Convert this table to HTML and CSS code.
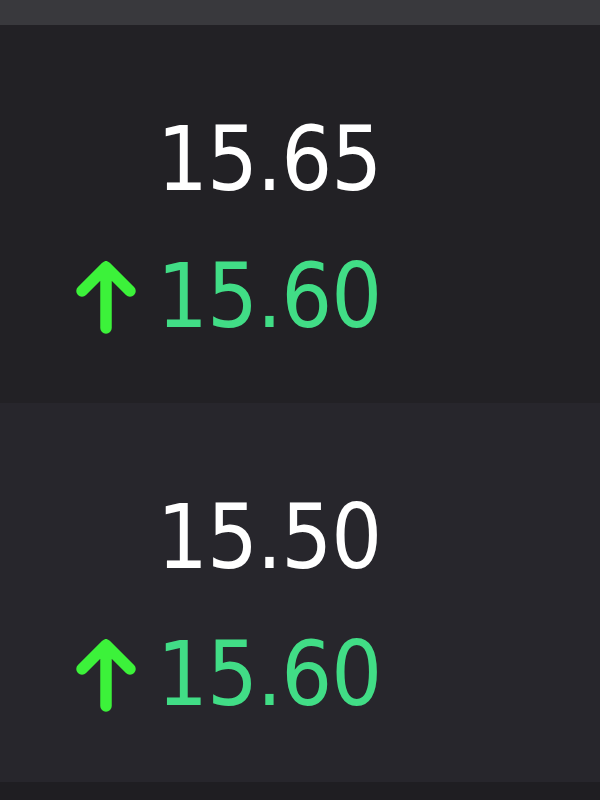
FILE: index.html
```html
<!DOCTYPE html>
<html>
<head>
<meta charset="utf-8">
<link rel="stylesheet" href="styles.css">
</head>
<body>
<div class="topbar"></div>
<section class="quote quote-a">
  <div class="row">
    <span class="icon"></span>
    <span class="price">15.65</span>
  </div>
  <div class="row up">
    <svg class="icon" viewBox="0 0 62 76" width="62" height="76"><path d="M32 69 V8 M8 32 L32 8 L56 32" fill="none" stroke="#3cf23a" stroke-width="11.5" stroke-linecap="round" stroke-linejoin="round"/></svg>
    <span class="price">15.60</span>
  </div>
</section>
<section class="quote quote-b">
  <div class="row">
    <span class="icon"></span>
    <span class="price">15.50</span>
  </div>
  <div class="row up">
    <svg class="icon" viewBox="0 0 62 76" width="62" height="76"><path d="M32 69 V8 M8 32 L32 8 L56 32" fill="none" stroke="#3cf23a" stroke-width="11.5" stroke-linecap="round" stroke-linejoin="round"/></svg>
    <span class="price">15.60</span>
  </div>
</section>
<div class="bottombar"></div>
</body>
</html>
```
FILE: styles.css
```css
html, body {
  margin: 0;
  padding: 0;
  background: #1f1e22;
}
body {
  width: 600px;
  height: 800px;
  overflow: hidden;
  font-family: "DejaVu Sans Condensed", "DejaVu Sans", sans-serif;
}
.topbar {
  height: 25px;
  background: #39393d;
}
.quote {
  height: 378px;
  box-sizing: border-box;
  padding: 90px 0 0 74px;
  display: flex;
  flex-direction: column;
  gap: 48px;
}
.quote-a { background: #222125; }
.quote-b { background: #27262c; height: 379px; }
.row {
  display: flex;
  align-items: center;
  gap: 21px;
  height: 89px;
}
.icon {
  width: 62px;
  height: 76px;
  flex: none;
  display: block;
}
.price {
  font-size: 89px;
  line-height: 1;
  letter-spacing: -1px;
  color: #ffffff;
}
.up .price {
  color: #41dd86;
}
.bottombar {
  height: 18px;
  background: #1f1e22;
}
```
